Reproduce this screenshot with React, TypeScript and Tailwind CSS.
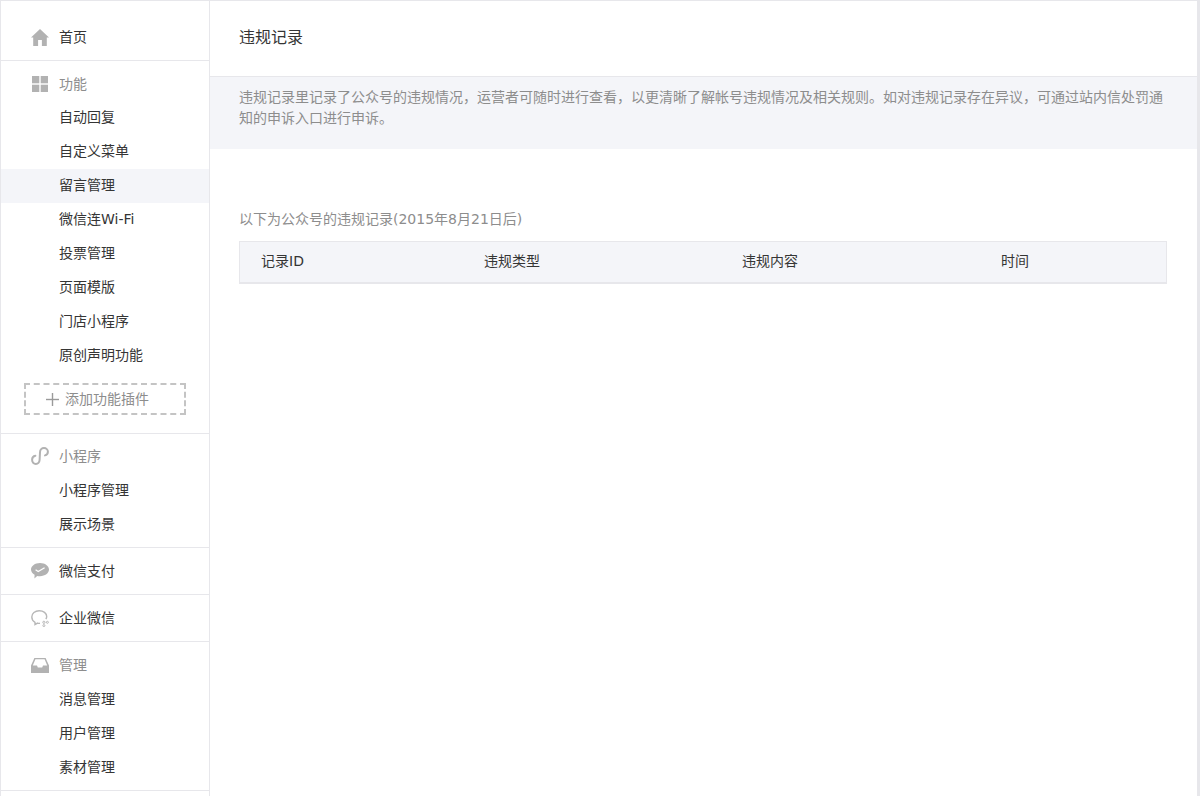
import React from "react";

const Home = () => (
  <svg viewBox="0 0 18 17" className="w-[18px] h-[17px] block" fill="#b2b2b2">
    <path d="M9 0 L18 8.6 L15.8 8.6 L15.8 17 L10.9 17 L10.9 11 L7.1 11 L7.1 17 L2.2 17 L2.2 8.6 L0 8.6 Z" />
  </svg>
);
const Grid = () => (
  <svg viewBox="0 0 16 16" className="w-4 h-4 block ml-px" fill="#b2b2b2">
    <rect x="0" y="0" width="7.3" height="7.3" />
    <rect x="8.7" y="0" width="7.3" height="7.3" />
    <rect x="0" y="8.7" width="7.3" height="7.3" />
    <rect x="8.7" y="8.7" width="7.3" height="7.3" />
  </svg>
);
const Mini = () => (
  <svg viewBox="0 0 18 18" className="w-[18px] h-[18px] block" fill="none" stroke="#b2b2b2" strokeWidth="2" strokeLinecap="round">
    <path d="M4.4 8.8 C2.4 9.2 1.1 10.8 1.1 12.8 C1.1 15.2 2.8 16.9 4.8 16.9 C6.9 16.9 8.4 15.2 8.6 13 L9 5.2 C9.1 2.9 10.8 1.1 13 1.1 C15.2 1.1 16.9 2.7 16.9 4.8 C16.9 6.6 15.7 8 14 8.4" />
  </svg>
);
const Pay = () => (
  <svg viewBox="0 0 18 16" className="w-[18px] h-4 block">
    <path d="M9 0 C14 0 18 2.9 18 6.6 C18 10.3 14 13.2 9 13.2 C8 13.2 7 13.1 6.2 12.9 L3.4 15.6 L3.6 11.8 C1.4 10.6 0 8.7 0 6.6 C0 2.9 4 0 9 0 Z" fill="#b2b2b2" />
    <path d="M4.6 6.8 L7.2 8.6 L13.6 4.8" fill="none" stroke="#fff" strokeWidth="1.3" />
  </svg>
);
const Work = () => (
  <svg viewBox="0 0 18 17" className="w-[18px] h-[17px] block" fill="none" stroke="#b8b8b8" strokeWidth="1.4">
    <path d="M14.9 9.2 C15.4 8.3 15.7 7.4 15.7 6.6 C15.7 3.2 12.4 .8 8.2 .8 C4 .8 .8 3.4 .8 7 C.8 9.3 2 11.2 4 12.3 L4 14.6 L6.6 13.1 C7.4 13.3 8.2 13.4 9 13.3" />
    <circle cx="12.9" cy="12.3" r="1.1" strokeWidth="1" />
    <circle cx="16.4" cy="12.3" r="1" strokeWidth="1" />
    <circle cx="12.9" cy="15.6" r="1" strokeWidth="1" />
  </svg>
);
const Tray = () => (
  <svg viewBox="0 0 18 15" className="w-[18px] h-[15px] block" fill="#b2b2b2">
    <path d="M3.4 0 L14.6 0 L18 7.6 L18 15 L0 15 L0 7.6 Z M4.4 1.2 L1.8 7.4 L6 7.4 L6.8 9.4 L11.2 9.4 L12 7.4 L16.2 7.4 L13.6 1.2 Z" fillRule="evenodd" />
  </svg>
);

const Item = ({ label, active }: { label: string; active?: boolean }) => (
  <div className={`h-[34px] pl-[58px] pb-[2px] flex items-center text-sm text-[#353535] ${active ? "bg-[#f4f5f9]" : ""}`}>{label}</div>
);

const Head = ({ icon, label, dark, raised }: { icon: React.ReactNode; label: string; dark?: boolean; raised?: boolean }) => (
  <div className={`h-[34px] flex items-center text-sm ${dark ? "text-[#353535]" : "text-[#8d8d8d]"}`}>
    <div className={`w-[58px] pl-[30px] shrink-0 ${raised ? "pb-[2px]" : ""}`}>{icon}</div>
    <span className={raised ? "pb-[2px]" : ""}>{label}</span>
  </div>
);

export default function App() {
  return (
    <div
      className="h-[796px] w-[1200px] overflow-hidden flex bg-white border-t border-l border-[#e7e7eb]"
      style={{ fontFamily: '"DejaVu Sans", "Noto Sans CJK SC", sans-serif' }}
    >
      <aside className="w-[209px] shrink-0 border-r border-[#e7e7eb]">
        <section className="pt-[19px] pb-[6px] border-b border-[#e7e7eb]">
          <Head icon={<Home />} label="首页" dark />
        </section>
        <section className="pt-[6px] pb-[18px] border-b border-[#e7e7eb]">
          <Head icon={<Grid />} label="功能" />
          <Item label="自动回复" />
          <Item label="自定义菜单" />
          <Item label="留言管理" active />
          <Item label="微信连Wi-Fi" />
          <Item label="投票管理" />
          <Item label="页面模版" />
          <Item label="门店小程序" />
          <Item label="原创声明功能" />
          <div className="mt-[10px] ml-[23px] h-8 w-[162px] border-2 border-dashed border-[#c4c4c4] pr-[15px] flex items-center justify-center text-sm text-[#8d8d8d]">
            <svg viewBox="0 0 13 13" className="w-[13px] h-[13px] mr-[6px]" fill="#9a9a9a">
              <rect x="0" y="5.8" width="13" height="1.4" />
              <rect x="5.8" y="0" width="1.4" height="13" />
            </svg>
            <span>添加功能插件</span>
          </div>
        </section>
        <section className="pt-[6px] pb-[5px] border-b border-[#e7e7eb]">
          <Head icon={<Mini />} label="小程序" raised />
          <Item label="小程序管理" />
          <Item label="展示场景" />
        </section>
        <section className="pt-[6px] pb-[6px] border-b border-[#e7e7eb]">
          <Head icon={<Pay />} label="微信支付" dark />
        </section>
        <section className="pt-[6px] pb-[6px] border-b border-[#e7e7eb]">
          <Head icon={<Work />} label="企业微信" dark />
        </section>
        <section className="pt-[7px] pb-[5px] border-b border-[#e7e7eb]">
          <Head icon={<Tray />} label="管理" raised />
          <Item label="消息管理" />
          <Item label="用户管理" />
          <Item label="素材管理" />
        </section>
      </aside>
      <main className="flex-1 min-w-0 border-r-[3px] border-[#e7e7eb]">
        <div className="h-[76px] pl-[29px] pb-[2px] flex items-center text-base text-[#353535] border-b border-[#e7e7eb]">违规记录</div>
        <div className="h-[72px] bg-[#f4f5f9] pl-[29px] pr-[30px] pt-[10px] text-sm leading-[21px] text-[#8d8d8d]">
          违规记录里记录了公众号的违规情况，运营者可随时进行查看，以更清晰了解帐号违规情况及相关规则。如对违规记录存在异议，可通过站内信处罚通知的申诉入口进行申诉。
        </div>
        <div className="pl-[29px] pr-[30px] pt-[60px]">
          <div className="text-sm leading-5 text-[#8d8d8d] mb-[12px]">以下为公众号的违规记录(2015年8月21日后)</div>
          <div className="h-[43px] bg-[#f4f5f9] border border-[#e7e7eb] border-b-2 pl-[21px] pb-[2px] grid grid-cols-[223px_258px_259px_1fr] items-center text-sm text-[#353535]">
            <div>记录ID</div>
            <div>违规类型</div>
            <div>违规内容</div>
            <div>时间</div>
          </div>
        </div>
      </main>
    </div>
  );
}
